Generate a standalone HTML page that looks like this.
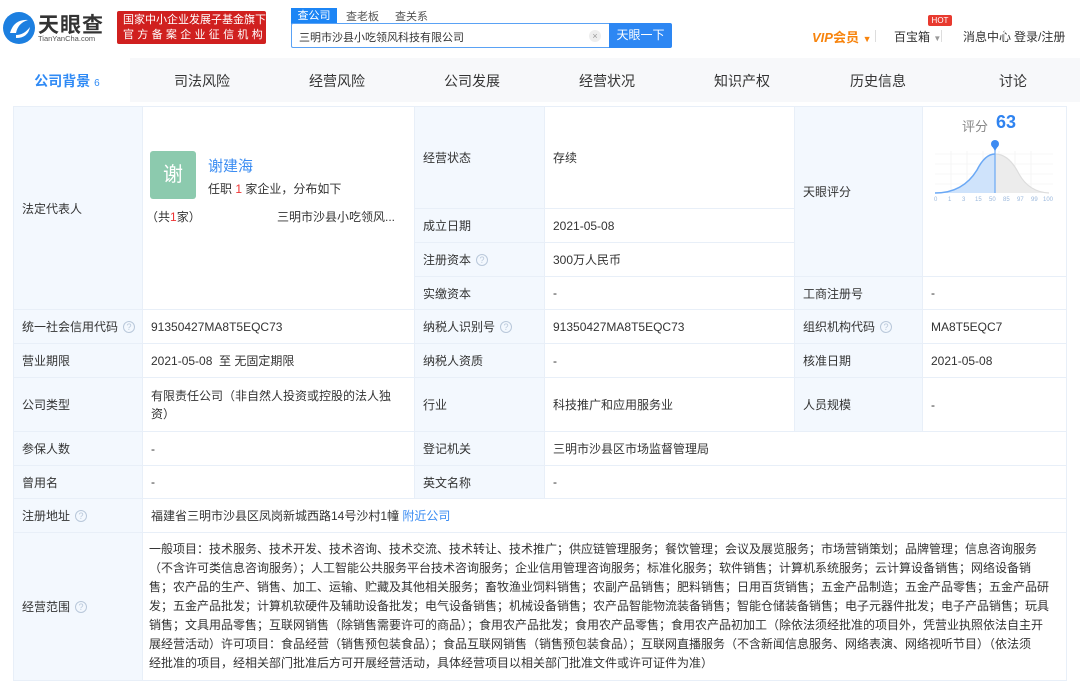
<!DOCTYPE html>
<html><head><meta charset="utf-8"><style>
*{margin:0;padding:0;box-sizing:border-box}
body{width:1080px;height:686px;overflow:hidden;background:#fff;font-family:"Liberation Sans","Noto Sans CJK SC",sans-serif;color:#333;font-size:12px;position:relative}
.a{position:absolute;white-space:nowrap}
.c{position:absolute;border:1px solid #e8eff8;margin:-1px 0 0 -1px;display:flex;align-items:center;padding-left:8px;font-size:12px;color:#333}
.l{background:#f3f8fe}
.q{display:inline-block;width:12px;height:12px;border:1px solid #b9c8da;border-radius:50%;font-size:9px;color:#b9c8da;text-align:center;line-height:10px;margin-left:5px}
.nav{position:absolute;top:58px;left:0;width:1080px;height:44px;background:#f7f8fa}
.nav span{position:absolute;top:13px;font-size:14px;color:#333;transform:translateX(-50%)}
</style></head><body>
<svg class="a" style="left:2px;top:11px" width="34" height="34" viewBox="0 0 34 34"><circle cx="17" cy="17" r="16" fill="#1c7fe0"/><path d="M8 22 Q12 8 26 9 Q16 12 14 22 Z" fill="#fff"/><path d="M14 24 Q22 24 28 16 Q26 27 14 27 Z" fill="#fff"/></svg>
<div class="a" style="left:38px;top:9px;font-size:21px;font-weight:bold;color:#333;letter-spacing:1px">天眼查</div>
<div class="a" style="left:38px;top:34px;font-size:7.5px;color:#555">TianYanCha.com</div>
<div class="a" style="left:117px;top:11px;width:149px;height:33px;background:#d0201f;border-radius:2px;color:#fff;font-size:11px;line-height:15px;padding:2px 0 0 6px">国家中小企业发展子基金旗下<br><span style="letter-spacing:3.3px">官方备案企业征信机构</span></div>
<div class="a" style="left:291px;top:8px;width:46px;height:16px;background:#1c85f5;color:#fff;font-size:11px;text-align:center;line-height:16px">查公司</div>
<div class="a" style="left:346px;top:8px;font-size:11px;color:#555">查老板</div>
<div class="a" style="left:395px;top:8px;font-size:11px;color:#555">查关系</div>
<div class="a" style="left:291px;top:23px;width:321px;height:25px;border:1px solid #5aa2f5;border-right:none;border-radius:2px 0 0 2px"></div>
<div class="a" style="left:299px;top:29px;font-size:11px;color:#333">三明市沙县小吃领风科技有限公司</div>
<div class="a" style="left:589px;top:30px;width:12px;height:12px;border-radius:50%;background:#eee;color:#999;font-size:9px;text-align:center;line-height:12px">×</div>
<div class="a" style="left:609px;top:23px;width:63px;height:25px;background:#2d87f3;color:#fff;font-size:12px;text-align:center;line-height:25px;border-radius:0 2px 2px 0">天眼一下</div>
<div class="a" style="left:812px;top:27px;font-size:13px;font-weight:bold;color:#f7830c"><i>VIP</i>会员 <span style="font-size:9px">▼</span></div>
<div class="a" style="left:875px;top:30px;width:1px;height:12px;background:#ddd"></div>
<div class="a" style="left:894px;top:28px;font-size:12px;color:#333">百宝箱 <span style="font-size:8px;color:#999">▼</span></div>
<div class="a" style="left:928px;top:15px;width:24px;height:11px;background:#e83a2f;color:#fff;font-size:8px;text-align:center;line-height:11px;border-radius:2px">HOT</div>
<div class="a" style="left:941px;top:30px;width:1px;height:12px;background:#ddd"></div>
<div class="a" style="left:963px;top:28px;font-size:12px;color:#333">消息中心</div>
<div class="a" style="left:1004px;top:30px;width:1px;height:12px;background:#ddd"></div>
<div class="a" style="left:1014px;top:28px;font-size:12px;color:#333">登录/注册</div>
<div class="nav">
<div class="a" style="left:0;top:0;width:130px;height:44px;background:#fff"></div>
<span style="left:67px;color:#2f8af5;font-weight:bold">公司背景 <small style="font-size:10px;font-weight:normal">6</small></span>
<span style="left:202px">司法风险</span><span style="left:337px">经营风险</span><span style="left:472px">公司发展</span><span style="left:607px">经营状况</span><span style="left:742px">知识产权</span><span style="left:878px">历史信息</span><span style="left:1013px">讨论</span>
</div>
<div class="c l" style="left:14px;top:107px;width:130px;height:204px">法定代表人</div>
<div class="c" style="left:143px;top:107px;width:273px;height:204px"></div>
<div class="a" style="left:150px;top:151px;width:46px;height:48px;background:#8ccaae;border-radius:3px;color:#fff;font-size:20px;text-align:center;line-height:48px">谢</div>
<div class="a" style="left:208px;top:155px;font-size:15px;color:#3b8cf2">谢建海</div>
<div class="a" style="left:208px;top:180px;font-size:12px">任职 <span style="color:#e33">1</span> 家企业，分布如下</div>
<div class="a" style="left:146px;top:208px;font-size:12px">（共<span style="color:#e33">1</span>家）</div>
<div class="a" style="left:277px;top:208px;font-size:12px">三明市沙县小吃领风...</div>
<div class="c l" style="left:415px;top:107px;width:131px;height:103px">经营状态</div>
<div class="c" style="left:545px;top:107px;width:251px;height:103px">存续</div>
<div class="c l" style="left:415px;top:209px;width:131px;height:35px">成立日期</div>
<div class="c" style="left:545px;top:209px;width:251px;height:35px">2021-05-08</div>
<div class="c l" style="left:415px;top:243px;width:131px;height:35px">注册资本<span class="q">?</span></div>
<div class="c" style="left:545px;top:243px;width:251px;height:35px">300万人民币</div>
<div class="c l" style="left:415px;top:277px;width:131px;height:34px">实缴资本</div>
<div class="c" style="left:545px;top:277px;width:251px;height:34px">-</div>
<div class="c l" style="left:795px;top:107px;width:129px;height:171px">天眼评分</div>
<div class="c" style="left:923px;top:107px;width:145px;height:171px"></div>
<div class="a" style="left:962px;top:116px;font-size:13px;color:#888">评分</div>
<div class="a" style="left:996px;top:112px;font-size:18px;font-weight:bold;color:#2f83f0">63</div>
<svg class="a" style="left:933px;top:136px" width="122" height="68" viewBox="0 0 122 68">
<g stroke="#f0f0f0" stroke-width="0.6"><path d="M2 18H120M2 28H120M2 38H120M2 48H120M18 15V57M34 15V57M50 15V57M66 15V57M82 15V57M98 15V57"/></g>
<path d="M62 18 Q76 18 86 38 Q96 56 116 57 L62 57Z" fill="#ececec"/>
<path d="M2 57 Q30 57 44 34 Q52 18 62 18 L62 57Z" fill="#cfe3fb"/>
<path d="M2 57 Q30 57 44 34 Q52 18 62 18" fill="none" stroke="#6aa8f5" stroke-width="1.5"/>
<path d="M62 18 Q76 18 86 38 Q96 56 116 57" fill="none" stroke="#ddd" stroke-width="1.2"/>
<path d="M62 14V57" stroke="#6aa8f5" stroke-width="1.2"/>
<circle cx="62" cy="8" r="4" fill="#3d8bf2"/><path d="M59 10L62 15L65 10Z" fill="#3d8bf2"/>
<text y="65" font-size="6" fill="#9bb8dc" font-family="Liberation Sans"><tspan x="1">0</tspan><tspan x="15">1</tspan><tspan x="29">3</tspan><tspan x="42">15</tspan><tspan x="56">50</tspan><tspan x="70">85</tspan><tspan x="84">97</tspan><tspan x="98">99</tspan><tspan x="110">100</tspan></text>
</svg>
<div class="c l" style="left:795px;top:277px;width:129px;height:34px">工商注册号</div>
<div class="c" style="left:923px;top:277px;width:145px;height:34px">-</div>

<div class="c l" style="left:14px;top:310px;width:130px;height:35px">统一社会信用代码<span class="q">?</span></div>
<div class="c" style="left:143px;top:310px;width:273px;height:35px">91350427MA8T5EQC73</div>
<div class="c l" style="left:415px;top:310px;width:131px;height:35px">纳税人识别号<span class="q">?</span></div>
<div class="c" style="left:545px;top:310px;width:251px;height:35px">91350427MA8T5EQC73</div>
<div class="c l" style="left:795px;top:310px;width:129px;height:35px">组织机构代码<span class="q">?</span></div>
<div class="c" style="left:923px;top:310px;width:145px;height:35px">MA8T5EQC7</div>

<div class="c l" style="left:14px;top:344px;width:130px;height:35px">营业期限</div>
<div class="c" style="left:143px;top:344px;width:273px;height:35px">2021-05-08&nbsp; 至 无固定期限</div>
<div class="c l" style="left:415px;top:344px;width:131px;height:35px">纳税人资质</div>
<div class="c" style="left:545px;top:344px;width:251px;height:35px">-</div>
<div class="c l" style="left:795px;top:344px;width:129px;height:35px">核准日期</div>
<div class="c" style="left:923px;top:344px;width:145px;height:35px">2021-05-08</div>

<div class="c l" style="left:14px;top:378px;width:130px;height:55px">公司类型</div>
<div class="c" style="left:143px;top:378px;width:273px;height:55px;line-height:18px;white-space:normal;padding-right:20px">有限责任公司（非自然人投资或控股的法人独<br>资）</div>
<div class="c l" style="left:415px;top:378px;width:131px;height:55px">行业</div>
<div class="c" style="left:545px;top:378px;width:251px;height:55px">科技推广和应用服务业</div>
<div class="c l" style="left:795px;top:378px;width:129px;height:55px">人员规模</div>
<div class="c" style="left:923px;top:378px;width:145px;height:55px">-</div>

<div class="c l" style="left:14px;top:432px;width:130px;height:35px">参保人数</div>
<div class="c" style="left:143px;top:432px;width:273px;height:35px">-</div>
<div class="c l" style="left:415px;top:432px;width:131px;height:35px">登记机关</div>
<div class="c" style="left:545px;top:432px;width:523px;height:35px">三明市沙县区市场监督管理局</div>

<div class="c l" style="left:14px;top:466px;width:130px;height:34px">曾用名</div>
<div class="c" style="left:143px;top:466px;width:273px;height:34px">-</div>
<div class="c l" style="left:415px;top:466px;width:131px;height:34px">英文名称</div>
<div class="c" style="left:545px;top:466px;width:523px;height:34px">-</div>

<div class="c l" style="left:14px;top:499px;width:130px;height:35px">注册地址<span class="q">?</span></div>
<div class="c" style="left:143px;top:499px;width:925px;height:35px">福建省三明市沙县区凤岗新城西路14号沙村1幢&nbsp; <span style="color:#3b8cf2">附近公司</span></div>

<div class="c l" style="left:14px;top:533px;width:130px;height:149px">经营范围<span class="q">?</span></div>
<div class="c" style="left:143px;top:533px;width:925px;height:149px;display:block;padding:7px 0 0 6px;font-size:12px;line-height:19px;white-space:nowrap">一般项目：技术服务、技术开发、技术咨询、技术交流、技术转让、技术推广；供应链管理服务；餐饮管理；会议及展览服务；市场营销策划；品牌管理；信息咨询服务<br>（不含许可类信息咨询服务）；人工智能公共服务平台技术咨询服务；企业信用管理咨询服务；标准化服务；软件销售；计算机系统服务；云计算设备销售；网络设备销<br>售；农产品的生产、销售、加工、运输、贮藏及其他相关服务；畜牧渔业饲料销售；农副产品销售；肥料销售；日用百货销售；五金产品制造；五金产品零售；五金产品研<br>发；五金产品批发；计算机软硬件及辅助设备批发；电气设备销售；机械设备销售；农产品智能物流装备销售；智能仓储装备销售；电子元器件批发；电子产品销售；玩具<br>销售；文具用品零售；互联网销售（除销售需要许可的商品）；食用农产品批发；食用农产品零售；食用农产品初加工（除依法须经批准的项目外，凭营业执照依法自主开<br>展经营活动）许可项目：食品经营（销售预包装食品）；食品互联网销售（销售预包装食品）；互联网直播服务（不含新闻信息服务、网络表演、网络视听节目）（依法须<br>经批准的项目，经相关部门批准后方可开展经营活动，具体经营项目以相关部门批准文件或许可证件为准）</div>
</body></html>
